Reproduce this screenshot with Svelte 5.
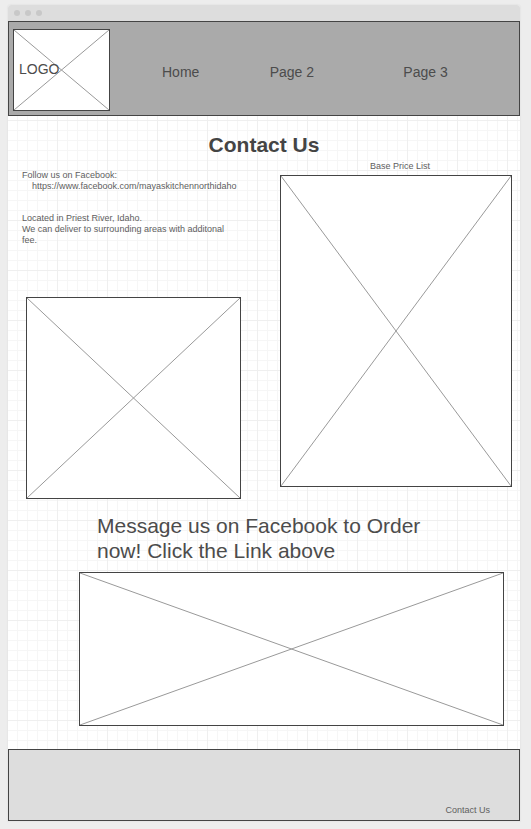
<script>
  const links = ['Home', 'Page 2', 'Page 3'];
  const facebook = 'https://www.facebook.com/mayaskitchennorthidaho';
</script>

{#snippet placeholder(label)}
  <svg class="cross" role="img" aria-label={label} viewBox="0 0 100 100" preserveAspectRatio="none">
    <path d="M0 0L100 100M100 0L0 100" vector-effect="non-scaling-stroke" />
  </svg>
{/snippet}

<div class="window">
  <div class="titlebar"><i></i><i></i><i></i></div>
  <header>
    <div class="frame logo">
      {@render placeholder('Logo')}
      <span>LOGO</span>
    </div>
    <nav>
      {#each links as link}
        <a href="#top">{link}</a>
      {/each}
    </nav>
  </header>

  <main>
    <h1>Contact Us</h1>
    <div class="columns">
      <section class="info">
        <p>Follow us on Facebook:<br /><a class="url" href={facebook}>{facebook}</a></p>
        <p>Located in Priest River, Idaho.<br />We can deliver to surrounding areas with additonal fee.</p>
        <div class="frame photo">{@render placeholder('Photo')}</div>
      </section>
      <section class="prices">
        <h2>Base Price List</h2>
        <div class="frame list">{@render placeholder('Base price list')}</div>
      </section>
    </div>
    <p class="message">Message us on Facebook to Order now! Click the Link above</p>
    <div class="frame banner">{@render placeholder('Banner')}</div>
  </main>

  <footer><a href="#top">Contact Us</a></footer>
</div>

<style>
  :global(body) {
    background: #ededed;
  }
  * {
    box-sizing: border-box;
  }
  .window {
    margin: 5px 11px 8px 8px;
    font-family: "Liberation Sans", Arial, sans-serif;
    font-size: 9px;
    line-height: 11px;
    color: #606060;
    background: #fff;
    border-radius: 3px 3px 0 0;
    box-shadow: 0 0 1px 1px #e6e6e6;
  }
  a {
    color: inherit;
    text-decoration: none;
  }
  h1,
  h2,
  p {
    margin: 0;
  }
  .titlebar {
    display: flex;
    align-items: center;
    gap: 5px;
    height: 16px;
    padding-left: 6px;
    background: #ddd;
    border-radius: 3px 3px 0 0;
  }
  .titlebar i {
    width: 6px;
    height: 6px;
    border-radius: 50%;
    background: #c8c8c8;
  }
  header {
    display: flex;
    height: 95px;
    padding: 7px 0 0 4px;
    background: #aaa;
    border: 1px solid #444;
  }
  .frame {
    background: #fff;
    border: 1px solid #444;
  }
  .cross {
    display: block;
    width: 100%;
    height: 100%;
  }
  .cross path {
    stroke: #999;
    stroke-width: 1;
    fill: none;
  }
  .logo {
    position: relative;
    flex: none;
    width: 97px;
    height: 82px;
  }
  .logo span {
    position: absolute;
    left: 5px;
    top: 31px;
    font-size: 14px;
    line-height: 16px;
    color: #4c4c4c;
  }
  nav {
    flex: 1;
    display: grid;
    grid-template-columns: 108fr 134fr 116fr;
    align-items: start;
    margin-left: 52px;
    padding-top: 35px;
    font-size: 14px;
    line-height: 16px;
    color: #4c4c4c;
  }
  main {
    padding: 16px 8px 23px 14px;
    background:
      linear-gradient(90deg, #efefef 1px, transparent 1px) -1px 0 / 50px 50px,
      linear-gradient(#efefef 1px, transparent 1px) 0 4px / 50px 50px,
      linear-gradient(90deg, #f6f6f6 1px, transparent 1px) -1px 0 / 10px 10px,
      linear-gradient(#f6f6f6 1px, #fff 1px) 0 4px / 10px 10px;
  }
  h1 {
    padding-right: 6px;
    font-size: 21px;
    line-height: 26px;
    text-align: center;
    color: #444;
  }
  .columns {
    display: grid;
    grid-template-columns: 219fr 232fr;
    gap: 39px;
    padding-top: 2px;
  }
  .info {
    padding-top: 10px;
  }
  .info p + p {
    margin-top: 21px;
  }
  .url {
    margin-left: 10px;
  }
  .photo {
    height: 202px;
    margin: 51px 0 0 4px;
  }
  h2 {
    padding: 1px 0 3px 8px;
    font-size: 9px;
    font-weight: 400;
    text-align: center;
  }
  .list {
    height: 312px;
  }
  .message {
    margin: 14px 70px 0 75px;
    font-size: 21px;
    line-height: 25px;
    color: #4c4c4c;
  }
  .banner {
    height: 154px;
    margin: 9px 8px 0 57px;
  }
  footer {
    display: flex;
    align-items: flex-end;
    justify-content: flex-end;
    height: 72px;
    padding: 0 29px 4px 0;
    background: #ddd;
    border: 1px solid #444;
  }
</style>
